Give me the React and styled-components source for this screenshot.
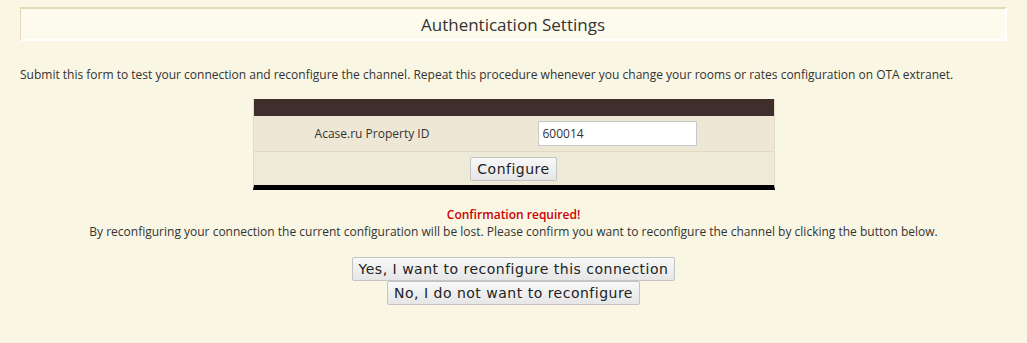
import styled, { createGlobalStyle } from "styled-components"

const Global = createGlobalStyle`
    body {
        margin: 0;
        background: #f9f6e4;
        font-family: "Open Sans", "DejaVu Sans", sans-serif;
        color: #333;
    }
`

const Page = styled.div`
    padding: 7px 20px 30px 20px;
    font-size: 12px;
`

const Header = styled.div`
    background: #fdfbed;
    border-top: 2px solid #e3dbb7;
    border-left: 1px solid #e3dbb7;
    border-right: 2px solid #fff;
    border-bottom: 2px solid #fff;
    height: 30px;
    display: flex;
    align-items: center;
    justify-content: center;
    font-size: 17px;
    color: #333;
`

const Intro = styled.p`
    margin: 25px 0 0 0;
    line-height: 17px;
`

const FormTable = styled.div`
    width: 520px;
    margin: 16px auto 0 auto;
    border-left: 1px solid #e3dcc4;
    border-right: 1px solid #e3dcc4;
    border-bottom: 5px solid #000;
`

const TableHead = styled.div`
    height: 17px;
    background: #3f2e2c;
`

const Row = styled.div`
    display: grid;
    grid-template-columns: ${p => p.$single ? "1fr" : "1fr 1fr"};
    align-items: center;
    height: ${p => p.$h}px;
    background: ${p => p.$bg};
    border-bottom: ${p => p.$line ? "1px solid #e0dac0" : "none"};
    justify-items: ${p => p.$single ? "center" : "stretch"};
`

const Label = styled.div`
    text-align: center;
    padding-right: 23px;
`

const InputCell = styled.div`
    padding-left: 24px;
`

const Input = styled.input`
    width: 159px;
    height: 25px;
    box-sizing: border-box;
    border: 1px solid #c8c8c8;
    background: #fff;
    font-family: "Open Sans", sans-serif;
    font-size: 12px;
    color: #333;
    padding: 2px 4px;
`

const Button = styled.button`
    font-family: "DejaVu Sans", sans-serif;
    font-size: 14px;
    letter-spacing: 0.5px;
    color: #222;
    background: linear-gradient(#f8f8f8, #e6e6e6);
    border: 1px solid #c4c4c4;
    border-radius: 2px;
    padding: 1px 6px;
    height: 24px;
    cursor: pointer;
`

const Confirm = styled.div`
    text-align: center;
    margin-top: 16px;
`

const Warning = styled.div`
    color: #cc0000;
    font-weight: 600;
    line-height: 17px;
`

const Message = styled.div`
    line-height: 17px;
`

const Actions = styled.div`
    display: flex;
    flex-direction: column;
    align-items: center;
    margin-top: 17px;
`

const App = () => {
    return (
        <>
            <Global />
            <Page>
                <Header>Authentication Settings</Header>
                <Intro>
                    Submit this form to test your connection and reconfigure the channel. Repeat this procedure whenever you change your rooms or rates configuration on OTA extranet.
                </Intro>
                <FormTable>
                    <TableHead />
                    <Row $h={35} $bg="#eee7d5" $line>
                        <Label>Acase.ru Property ID</Label>
                        <InputCell>
                            <Input defaultValue="600014" />
                        </InputCell>
                    </Row>
                    <Row $h={33} $bg="#eeead8" $single>
                        <Button>Configure</Button>
                    </Row>
                </FormTable>
                <Confirm>
                    <Warning>Confirmation required!</Warning>
                    <Message>
                        By reconfiguring your connection the current configuration will be lost. Please confirm you want to reconfigure the channel by clicking the button below.
                    </Message>
                </Confirm>
                <Actions>
                    <Button>Yes, I want to reconfigure this connection</Button>
                    <Button>No, I do not want to reconfigure</Button>
                </Actions>
            </Page>
        </>
    )
}

export default App
